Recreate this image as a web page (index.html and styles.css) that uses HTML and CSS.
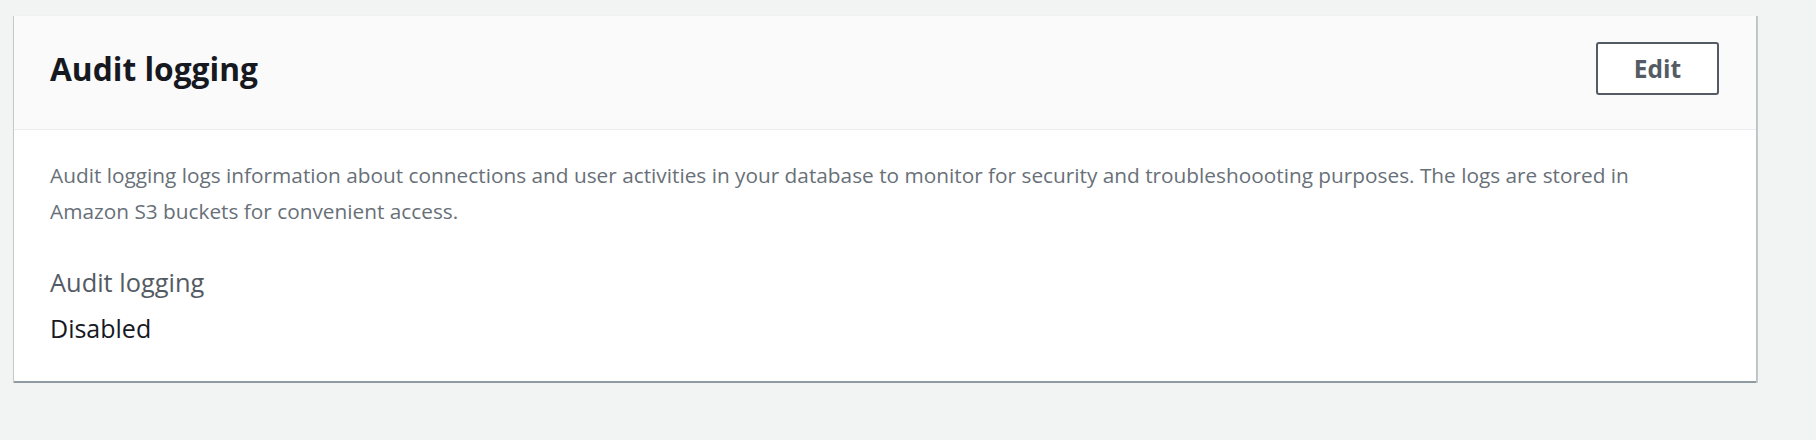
FILE: index.html
```html
<!DOCTYPE html>
<html lang="en">
<head>
<meta charset="utf-8">
<title>Audit logging</title>
<link rel="stylesheet" href="styles.css">
</head>
<body>
<main class="page">
  <section class="card">
    <header class="card-header">
      <h2 class="card-title">Audit logging</h2>
      <button class="btn" type="button">Edit</button>
    </header>
    <div class="card-body">
      <p class="description">Audit logging logs information about connections and user activities in your database to monitor for security and troubleshoooting purposes. The logs are stored in Amazon&nbsp;S3 buckets for convenient access.</p>
      <div class="kv">
        <div class="kv-label">Audit logging</div>
        <div class="kv-value">Disabled</div>
      </div>
    </div>
  </section>
</main>
</body>
</html>
```

FILE: styles.css
```css
html, body {
  margin: 0;
  padding: 0;
  background: #f2f3f3;
  font-family: "Open Sans", "Noto Sans", "Liberation Sans", sans-serif;
  color: #16191f;
}

.page {
  padding: 16px 60px 0 14px;
}

.card {
  background: #ffffff;
  border-bottom: 2px solid #8f9aa1;
  box-shadow: 0 1px 2px 0 rgba(0, 28, 36, 0.15),
              2px 0 0 0 rgba(0, 28, 36, 0.18),
              -1px 0 0 0 rgba(0, 28, 36, 0.15);
}

.card-header {
  display: flex;
  align-items: center;
  justify-content: space-between;
  background: #fafafa;
  border-bottom: 1px solid #eaeded;
  padding: 26px 37px 34px 36px;
}

.card-title {
  margin: 0;
  font-size: 31.7px;
  font-weight: 700;
  line-height: 40px;
  color: #16191f;
}

.btn {
  width: 123px;
  height: 53px;
  background: #ffffff;
  border: 2px solid #545b64;
  border-radius: 3px;
  font-family: inherit;
  font-size: 24.5px;
  font-weight: 700;
  color: #545b64;
  padding: 0;
  cursor: pointer;
}

.card-body {
  padding: 27px 37px 35px 36px;
}

.description {
  margin: 0 0 35px;
  font-size: 20.8px;
  line-height: 36px;
  color: #687078;
}

.kv-label {
  font-size: 25.4px;
  line-height: 36px;
  color: #545b64;
  margin-bottom: 10px;
}

.kv-value {
  font-size: 25px;
  line-height: 36px;
  color: #16191f;
}
```
